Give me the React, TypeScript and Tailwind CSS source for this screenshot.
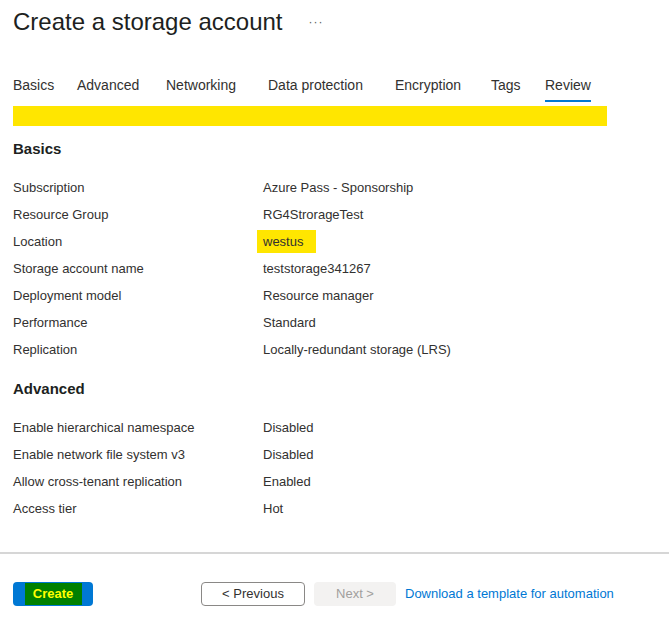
const basics: [string, string][] = [
  ['Subscription', 'Azure Pass - Sponsorship'],
  ['Resource Group', 'RG4StrorageTest'],
  ['Location', 'westus'],
  ['Storage account name', 'teststorage341267'],
  ['Deployment model', 'Resource manager'],
  ['Performance', 'Standard'],
  ['Replication', 'Locally-redundant storage (LRS)'],
];

const advanced: [string, string][] = [
  ['Enable hierarchical namespace', 'Disabled'],
  ['Enable network file system v3', 'Disabled'],
  ['Allow cross-tenant replication', 'Enabled'],
  ['Access tier', 'Hot'],
];

const tabs: { name: string; w: string }[] = [
  { name: 'Basics', w: 'w-[64px]' },
  { name: 'Advanced', w: 'w-[89px]' },
  { name: 'Networking', w: 'w-[102px]' },
  { name: 'Data protection', w: 'w-[127px]' },
  { name: 'Encryption', w: 'w-[96px]' },
  { name: 'Tags', w: 'w-[54px]' },
  { name: 'Review', w: 'w-auto' },
];

const Row = ({ label, value }: { label: string; value: string }) => (
  <div className="flex h-[27px] items-center text-[13px] text-[#323130]">
    <div className="w-[250px]">{label}</div>
    {value === 'westus' ? (
      <div className="-ml-[6px] bg-[#ffe600] px-[6px] py-[2px] w-[59px]">{value}</div>
    ) : (
      <div>{value}</div>
    )}
  </div>
);

export default function App() {
  return (
    <div className="w-[669px] h-[620px] bg-white font-['Segoe_UI','Liberation_Sans',sans-serif] text-[#323130] overflow-hidden">
      <div className="px-[13px]">
        {/* Title */}
        <div className="flex items-center h-8 mt-[6px]">
          <h1 className="text-[24px] font-normal leading-8 text-[#201f1e]">Create a storage account</h1>
          <span className="ml-[26px] text-[12px] text-[#605e5c] tracking-[1px]">···</span>
        </div>

        {/* Tabs */}
        <div className="flex mt-[37px] h-[27px] text-[14px]">
          {tabs.map((t) => (
            <div key={t.name} className={`${t.w} flex flex-col items-start`}>
              <span className="leading-5 text-[#323130]">{t.name}</span>
              {t.name === 'Review' && <div className="mt-[5px] h-[2px] w-full bg-[#0078d4]" />}
            </div>
          ))}
        </div>

        {/* Highlighted banner */}
        <div className="mt-[4px] h-[20px] w-[594px] bg-[#ffe600]" />

        {/* Basics */}
        <h2 className="mt-[13px] text-[15px] font-bold leading-5 text-[#201f1e]">Basics</h2>
        <div className="mt-[15px]">
          {basics.map(([l, v]) => (
            <Row key={l} label={l} value={v} />
          ))}
        </div>

        {/* Advanced */}
        <h2 className="mt-[16px] text-[15px] font-bold leading-5 text-[#201f1e]">Advanced</h2>
        <div className="mt-[15px]">
          {advanced.map(([l, v]) => (
            <Row key={l} label={l} value={v} />
          ))}
        </div>
      </div>

      <div className="mt-[30px] h-[2px] bg-[#d6d6d6]" />

      {/* Footer */}
      <div className="flex items-center px-[13px] mt-[28px] text-[13px]">
        <button className="h-6 w-[80px] rounded-sm bg-[#0078d4] flex items-center justify-center py-[1px]">
          <span className="h-full w-[57px] bg-[#008000] flex items-center justify-center font-semibold text-[#ffff00]">Create</span>
        </button>
        <button className="ml-[108px] h-6 w-[104px] rounded-sm border border-[#8a8886] bg-white text-[#323130]">&lt; Previous</button>
        <button className="ml-[9px] h-6 w-[82px] rounded-sm bg-[#f3f2f1] text-[#a19f9d]">Next &gt;</button>
        <a className="ml-[9px] text-[#0078d4]">Download a template for automation</a>
      </div>
    </div>
  );
}
